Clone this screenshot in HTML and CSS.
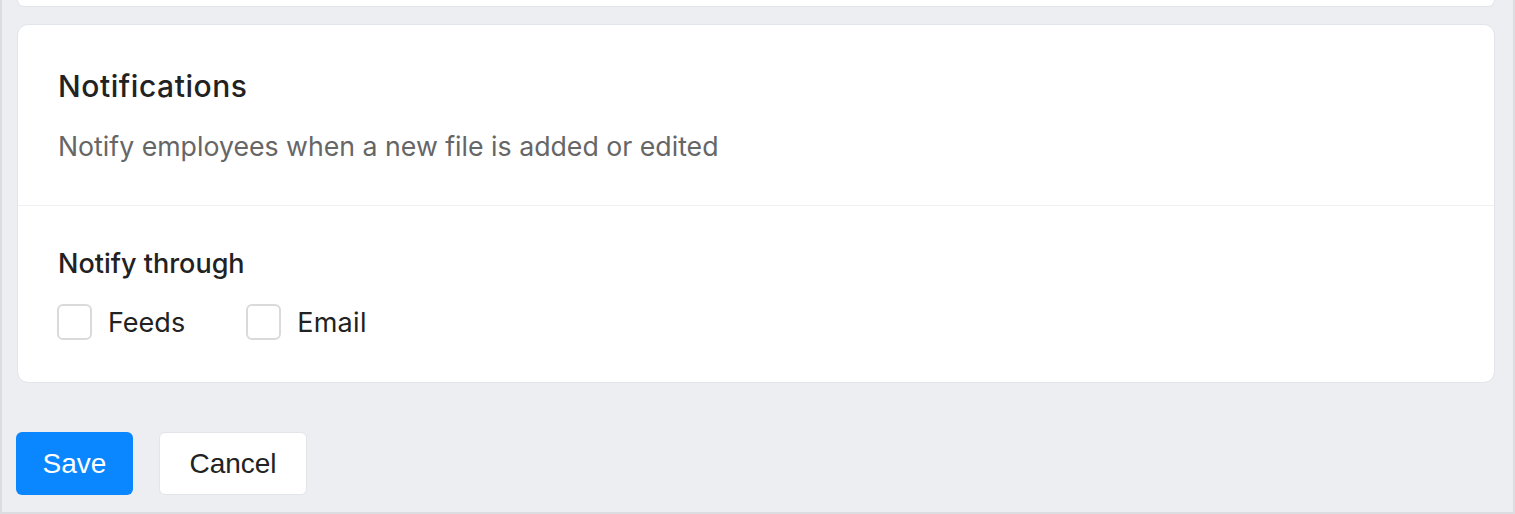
FILE: index.html
```html
<!DOCTYPE html>
<html>
<head>
<meta charset="utf-8">
<link rel="stylesheet" href="styles.css">
</head>
<body>
<div class="frame">
  <div class="prev-card"></div>
  <div class="card">
    <div class="card-head">
      <h2 class="title">Notifications</h2>
      <p class="desc">Notify employees when a new file is added or edited</p>
    </div>
    <div class="card-body">
      <div class="label">Notify through</div>
      <div class="options">
        <label class="option"><span class="box"></span><span class="opt-text">Feeds</span></label>
        <label class="option"><span class="box"></span><span class="opt-text">Email</span></label>
      </div>
    </div>
  </div>
  <div class="actions">
    <button class="btn btn-primary">Save</button>
    <button class="btn btn-secondary">Cancel</button>
  </div>
</div>
</body>
</html>
```
FILE: styles.css
```css
* { box-sizing: border-box; }
html, body { margin: 0; padding: 0; }
body {
  background: #edeef2;
  font-family: Inter, "Noto Sans", sans-serif;
}
.frame {
  height: 514px;
  border-left: 2px solid #dcdde0;
  border-right: 2px solid #dcdde0;
  border-bottom: 2px solid #dcdde0;
  padding: 0 18px 0 15px;
  display: flex;
  flex-direction: column;
}
.prev-card {
  height: 7px;
  background: #fff;
  border: 1px solid #e1e4e9;
  border-top: none;
  border-radius: 0 0 10px 10px;
}
.card {
  margin-top: 17px;
  height: 359px;
  background: #fff;
  border: 1px solid #e1e4e9;
  border-radius: 11px;
  display: flex;
  flex-direction: column;
}
.card-head {
  height: 181px;
  padding: 45px 40px 0;
  border-bottom: 1px solid #f0f1f3;
}
.title {
  margin: 0;
  font-size: 30px;
  font-weight: 500;
  letter-spacing: 0.55px;
  color: #222;
  line-height: 32px;
}
.desc {
  margin: 28px 0 0;
  font-size: 26.7px;
  color: #666;
  line-height: 32px;
}
.card-body {
  padding: 42px 40px 0;
}
.label {
  font-size: 27px;
  font-weight: 500;
  color: #222;
  line-height: 32px;
}
.options {
  margin-top: 24px;
  display: flex;
  gap: 62px;
}
.option {
  display: flex;
  align-items: center;
  gap: 16px;
}
.box {
  width: 35px;
  height: 36px;
  margin-left: -1px;
  border: 2px solid #dadada;
  border-radius: 6px;
  background: #fff;
}
.opt-text {
  font-size: 27px;
  color: #222;
}
.option + .option .opt-text {
  letter-spacing: 0.3px;
}
.actions {
  margin-top: 49px;
  display: flex;
  gap: 26px;
}
.btn {
  height: 63px;
  border-radius: 6px;
  font-family: "Liberation Sans", Arial, sans-serif;
  font-size: 28px;
  padding: 0;
}
.btn-primary {
  width: 117px;
  margin-left: -1px;
  background: #0a86ff;
  border: none;
  color: #fff;
}
.btn-secondary {
  width: 148px;
  background: #fff;
  border: 1px solid #e2e4e8;
  color: #222;
}
```
